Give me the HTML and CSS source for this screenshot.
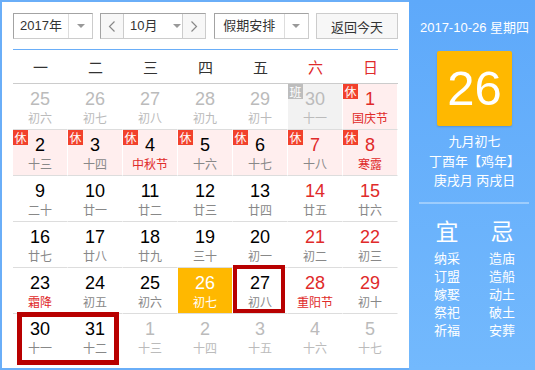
FILE: index.html
```html
<!DOCTYPE html>
<html lang="zh-CN">
  <head>
    <meta charset="UTF-8" />
    <title>万年历</title>
    <link rel="stylesheet" href="styles.css">
  </head>
  <body>
    <div class="calendar">
      <div class="main">
        <div class="toolbar">
          <div class="select year">
            <span class="select-text">2017年</span>
            <span class="select-arrow"><i class="caret"></i></span>
          </div>
          <div class="select month-nav">
            <span class="nav-btn prev">
              <svg width="8" height="11" viewBox="0 0 8 11"><polyline points="6.5,0.5 1.5,5.5 6.5,10.5" fill="none" stroke="#888" stroke-width="1.2" /></svg>
            </span>
            <span class="month-text">10月<i class="caret"></i></span>
            <span class="nav-btn next">
              <svg width="8" height="11" viewBox="0 0 8 11"><polyline points="1.5,0.5 6.5,5.5 1.5,10.5" fill="none" stroke="#888" stroke-width="1.2" /></svg>
            </span>
          </div>
          <div class="select holiday">
            <span class="select-text">假期安排</span>
            <span class="select-arrow"><i class="caret"></i></span>
          </div>
          <button class="today-btn">返回今天</button>
        </div>

        <div class="weekdays">
          <span>一</span><span>二</span><span>三</span><span>四</span><span>五</span>
          <span class="red">六</span><span class="red">日</span>
        </div>

        <div class="days">
          <div class="day other"><b>25</b><small>初六</small></div>
          <div class="day other"><b>26</b><small>初七</small></div>
          <div class="day other"><b>27</b><small>初八</small></div>
          <div class="day other"><b>28</b><small>初九</small></div>
          <div class="day other"><b>29</b><small>初十</small></div>
          <div class="day other work"><em class="badge">班</em><b>30</b><small>十一</small></div>
          <div class="day rest weekend"><em class="badge">休</em><b>1</b><small class="fest">国庆节</small></div>

          <div class="day rest"><em class="badge">休</em><b>2</b><small>十三</small></div>
          <div class="day rest"><em class="badge">休</em><b>3</b><small>十四</small></div>
          <div class="day rest"><em class="badge">休</em><b>4</b><small class="fest">中秋节</small></div>
          <div class="day rest"><em class="badge">休</em><b>5</b><small>十六</small></div>
          <div class="day rest"><em class="badge">休</em><b>6</b><small>十七</small></div>
          <div class="day rest weekend"><em class="badge">休</em><b>7</b><small>十八</small></div>
          <div class="day rest weekend"><em class="badge">休</em><b>8</b><small class="fest">寒露</small></div>

          <div class="day"><b>9</b><small>二十</small></div>
          <div class="day"><b>10</b><small>廿一</small></div>
          <div class="day"><b>11</b><small>廿二</small></div>
          <div class="day"><b>12</b><small>廿三</small></div>
          <div class="day"><b>13</b><small>廿四</small></div>
          <div class="day weekend"><b>14</b><small>廿五</small></div>
          <div class="day weekend"><b>15</b><small>廿六</small></div>

          <div class="day"><b>16</b><small>廿七</small></div>
          <div class="day"><b>17</b><small>廿八</small></div>
          <div class="day"><b>18</b><small>廿九</small></div>
          <div class="day"><b>19</b><small>三十</small></div>
          <div class="day"><b>20</b><small>初一</small></div>
          <div class="day weekend"><b>21</b><small>初二</small></div>
          <div class="day weekend"><b>22</b><small>初三</small></div>

          <div class="day"><b>23</b><small class="fest">霜降</small></div>
          <div class="day"><b>24</b><small>初五</small></div>
          <div class="day"><b>25</b><small>初六</small></div>
          <div class="day today"><b>26</b><small>初七</small></div>
          <div class="day"><b>27</b><small>初八</small></div>
          <div class="day weekend"><b>28</b><small class="fest">重阳节</small></div>
          <div class="day weekend"><b>29</b><small>初十</small></div>

          <div class="day last"><b>30</b><small>十一</small></div>
          <div class="day last"><b>31</b><small>十二</small></div>
          <div class="day last other"><b>1</b><small>十三</small></div>
          <div class="day last other"><b>2</b><small>十四</small></div>
          <div class="day last other"><b>3</b><small>十五</small></div>
          <div class="day last other"><b>4</b><small>十六</small></div>
          <div class="day last other"><b>5</b><small>十七</small></div>

          <span class="mark mark-single"></span>
          <span class="mark mark-range"></span>
        </div>
      </div>

      <div class="side">
        <div class="side-date">2017-10-26 星期四</div>
        <div class="side-day">26</div>
        <div class="side-lunar">
          <p>九月初七</p>
          <p>丁酉年【鸡年】</p>
          <p>庚戌月 丙戌日</p>
        </div>
        <div class="side-line"></div>
        <div class="yiji">
          <div class="yiji-col">
            <h3>宜</h3>
            <p>纳采</p><p>订盟</p><p>嫁娶</p><p>祭祀</p><p>祈福</p>
          </div>
          <div class="yiji-col">
            <h3>忌</h3>
            <p>造庙</p><p>造船</p><p>动土</p><p>破土</p><p>安葬</p>
          </div>
        </div>
      </div>
    </div>
  </body>
</html>
```

FILE: styles.css
```css
body {
  margin: 0;
  padding: 0;
  font-family: "Liberation Sans", "Noto Sans CJK SC", sans-serif;
  color: #333;
  background: #fff;
}
.calendar {
  display: flex;
  width: 535px;
  height: 370px;
}
.main {
  width: 409px;
  height: 370px;
  box-sizing: border-box;
  border: 2px solid #6aaef8;
  border-right: 0;
  padding: 11px 11px 0;
  background: #fff;
}
.toolbar {
  display: flex;
  justify-content: space-between;
  height: 26px;
}
.select {
  display: flex;
  height: 26px;
  box-sizing: border-box;
  border: 1px solid #ccc;
  border-top-color: #a3a3a3;
  border-left-color: #a3a3a3;
  background: #fff;
  font-size: 13px;
  line-height: 24px;
}
.select-text {
  flex: 1;
  text-align: center;
}
.select-arrow {
  width: 23px;
  border-left: 1px solid #ddd;
  display: flex;
  align-items: center;
  justify-content: center;
}
.caret {
  display: inline-block;
  width: 0;
  height: 0;
  border-left: 4px solid transparent;
  border-right: 4px solid transparent;
  border-top: 4px solid #999;
}
.year {
  width: 80px;
}
.holiday {
  width: 95px;
}
.month-nav {
  width: 106px;
}
.nav-btn {
  width: 22px;
  background: #f7f7f7;
  display: flex;
  align-items: center;
  justify-content: center;
}
.nav-btn.prev {
  border-right: 1px solid #ccc;
}
.nav-btn.next {
  border-left: 1px solid #ccc;
}
.month-text {
  flex: 1;
  display: flex;
  align-items: center;
  justify-content: center;
  gap: 15px;
  padding-left: 4px;
}
.today-btn {
  width: 82px;
  height: 26px;
  border: 1px solid #ccc;
  background: #f7f7f7;
  font-family: "Noto Sans CJK SC", sans-serif;
  font-size: 13px;
  color: #333;
  padding: 0;
}
.weekdays {
  display: grid;
  grid-template-columns: repeat(7, 55px);
  margin-top: 10px;
  height: 33px;
  border-top: 1px solid #6aaef8;
  border-bottom: 1px solid #ccc;
  font-family: "Noto Sans CJK SC", sans-serif;
  font-size: 15px;
  line-height: 33px;
  text-align: center;
  color: #333;
}
.weekdays .red {
  color: #e02a2a;
}
.days {
  position: relative;
  display: grid;
  grid-template-columns: repeat(7, 55px);
  grid-auto-rows: 46px;
}
.day {
  position: relative;
  box-sizing: border-box;
  border-right: 1px solid #fff;
  border-bottom: 1px solid #ddd;
  padding-top: 5px;
  text-align: center;
}
.day.last {
  border-bottom-color: transparent;
}
.day b {
  display: block;
  font-weight: normal;
  font-size: 18px;
  line-height: 20px;
  color: #000;
}
.day small {
  display: block;
  font-family: "Noto Sans CJK SC", sans-serif;
  font-size: 12px;
  line-height: 18px;
  color: #888;
}
.day.weekend b,
.day small.fest {
  color: #e02a2a;
}
.day.other b,
.day.other small {
  color: #bbb;
}
.day.rest {
  background: #ffeeee;
}
.day.work {
  background: #f2f2f2;
}
.day.today {
  background: #ffb800;
}
.day.today b,
.day.today small {
  color: #fff;
}
.badge {
  position: absolute;
  left: 0;
  top: 0;
  width: 15px;
  height: 15px;
  background: #f2412c;
  color: #fff;
  font-style: normal;
  font-family: "Noto Sans CJK SC", sans-serif;
  font-size: 12px;
  line-height: 15px;
  text-align: center;
}
.day.work .badge {
  background: #bdbdbd;
}
.mark {
  position: absolute;
  box-sizing: border-box;
  border: 4px solid #b80000;
}
.mark-single {
  left: 220px;
  top: 181px;
  width: 52px;
  height: 48px;
}
.mark-range {
  left: 4px;
  top: 228px;
  width: 102px;
  height: 53px;
  border-width: 5px;
}
.side {
  flex: 1;
  height: 370px;
  box-sizing: border-box;
  padding: 19px 0 0 5px;
  background: linear-gradient(#5ea9fa, #73b9fd);
  color: #fff;
  text-align: center;
  font-family: "Liberation Sans", "Noto Sans CJK SC", sans-serif;
}
.side-date {
  font-size: 13px;
  line-height: 18px;
}
.side-day {
  width: 75px;
  height: 75px;
  margin: 14px auto 0;
  border-radius: 2px;
  background: #ffb800;
  box-shadow: 0 1px 2px rgba(0, 0, 0, 0.15);
  font-size: 49px;
  line-height: 75px;
}
.side-lunar {
  margin-top: 6px;
  font-size: 13px;
  line-height: 19.5px;
}
.side-lunar p {
  margin: 0;
}
.side-line {
  height: 2px;
  margin: 11px 6px 0 5px;
  background: rgba(255, 255, 255, 0.35);
}
.yiji {
  display: flex;
  justify-content: center;
  margin-top: 12px;
}
.yiji-col {
  width: 55px;
}
.yiji h3 {
  margin: 0 0 5px;
  font-family: "Noto Sans CJK SC", sans-serif;
  font-weight: normal;
  font-size: 23px;
  line-height: 28px;
}
.yiji p {
  margin: 0;
  font-family: "Noto Sans CJK SC", sans-serif;
  font-size: 13px;
  line-height: 18px;
}
```
